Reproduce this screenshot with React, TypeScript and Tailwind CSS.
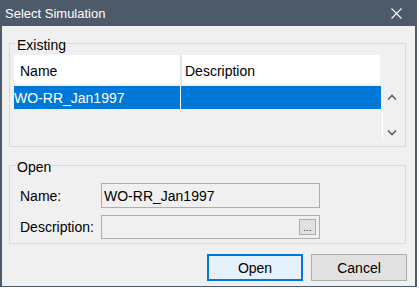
import React from "react";

const ChevronUp = () => (
    <svg width="10" height="6" viewBox="0 0 10 6" fill="none">
        <path d="M1 5.5 L5 1.5 L9 5.5" stroke="#606060" strokeWidth="1.6" />
    </svg>
);

const ChevronDown = () => (
    <svg width="10" height="6" viewBox="0 0 10 6" fill="none">
        <path d="M1 0.5 L5 4.5 L9 0.5" stroke="#606060" strokeWidth="1.6" />
    </svg>
);

const CloseIcon = () => (
    <svg width="11" height="11" viewBox="0 0 11 11" fill="none">
        <path d="M0.5 0.5 L10.5 10.5 M10.5 0.5 L0.5 10.5" stroke="#ffffff" strokeWidth="1.1" />
    </svg>
);

const App = () => {
    return (
        <div className="w-[419px] h-[289px] bg-white font-['Liberation_Sans',Arial,sans-serif] text-[14px] text-black">
            <div className="w-[417px] h-[287px] flex flex-col border-l-2 border-r-2 border-b border-[#4d5a6a] bg-[#f0f0f0]">
                {/* title bar */}
                <div className="h-[26px] shrink-0 bg-[#4d5a6a] flex items-center justify-between pl-[3px] pr-[13px]">
                    <span className="text-white text-[13px] leading-none">Select Simulation</span>
                    <CloseIcon />
                </div>

                <div className="flex-1 flex flex-col pl-[7px]">
                    {/* Existing */}
                    <fieldset className="mt-[7px] w-[397px] border border-[#d9d9d9]">
                        <legend className="ml-[6px] px-[1px] pt-[4px] leading-4">Existing</legend>
                        <div className="pl-[4px] pr-[5px] pt-[2px] pb-[4px]">
                            <div className="flex h-[29px] w-[366px] bg-white items-center leading-4">
                                <div className="w-[166px] h-full flex items-center pl-[6px] pt-[2px]">Name</div>
                                <div className="w-[2px] h-full bg-[#e5e5e5]" />
                                <div className="flex-1 h-full flex items-center pl-[3px] pt-[2px]">Description</div>
                            </div>
                            <div className="flex mt-[2px] h-[56px]">
                                <div className="w-[368px]">
                                    <div className="flex h-[23px] w-[367px] bg-[#0078d7] text-white items-center leading-4">
                                        <div className="w-[166px]">WO-RR_Jan1997</div>
                                        <div className="w-[1px] h-full bg-white" />
                                        <div className="flex-1" />
                                    </div>
                                </div>
                                <div className="w-[18px] border-l border-white flex flex-col items-center justify-between pt-[8px] pb-[6px]">
                                    <ChevronUp />
                                    <ChevronDown />
                                </div>
                            </div>
                        </div>
                    </fieldset>

                    {/* Open */}
                    <fieldset className="mt-[8px] w-[397px] border border-[#d9d9d9]">
                        <legend className="ml-[6px] px-[1px] pt-[4px] leading-4">Open</legend>
                        <div className="pl-[10px] pt-[8px] pb-[4px] flex flex-col gap-[7px]">
                            <div className="flex items-center">
                                <span className="w-[81px] leading-4">Name:</span>
                                <div className="w-[219px] h-[25px] border border-[#adadad] flex items-center pl-[2px] leading-4">
                                    WO-RR_Jan1997
                                </div>
                            </div>
                            <div className="flex items-center">
                                <span className="w-[81px] leading-4">Description:</span>
                                <div className="w-[219px] h-[24px] border border-[#adadad] flex items-center justify-end pr-[3px]">
                                    <div className="w-[17px] h-[16px] border border-[#adadad] bg-[#e1e1e1] flex items-end justify-center pb-[1px] text-[10px] leading-none text-[#333]">
                                        ...
                                    </div>
                                </div>
                            </div>
                        </div>
                    </fieldset>

                    {/* buttons */}
                    <div className="flex justify-end gap-[8px] mt-[10px] pr-[8px]">
                        <button className="w-[96px] h-[27px] border-2 border-[#0078d7] bg-[#e5f1fb] leading-4">Open</button>
                        <button className="w-[96px] h-[27px] border border-[#adadad] bg-[#e1e1e1] leading-4">Cancel</button>
                    </div>
                </div>
            </div>
        </div>
    );
};

export default App;
